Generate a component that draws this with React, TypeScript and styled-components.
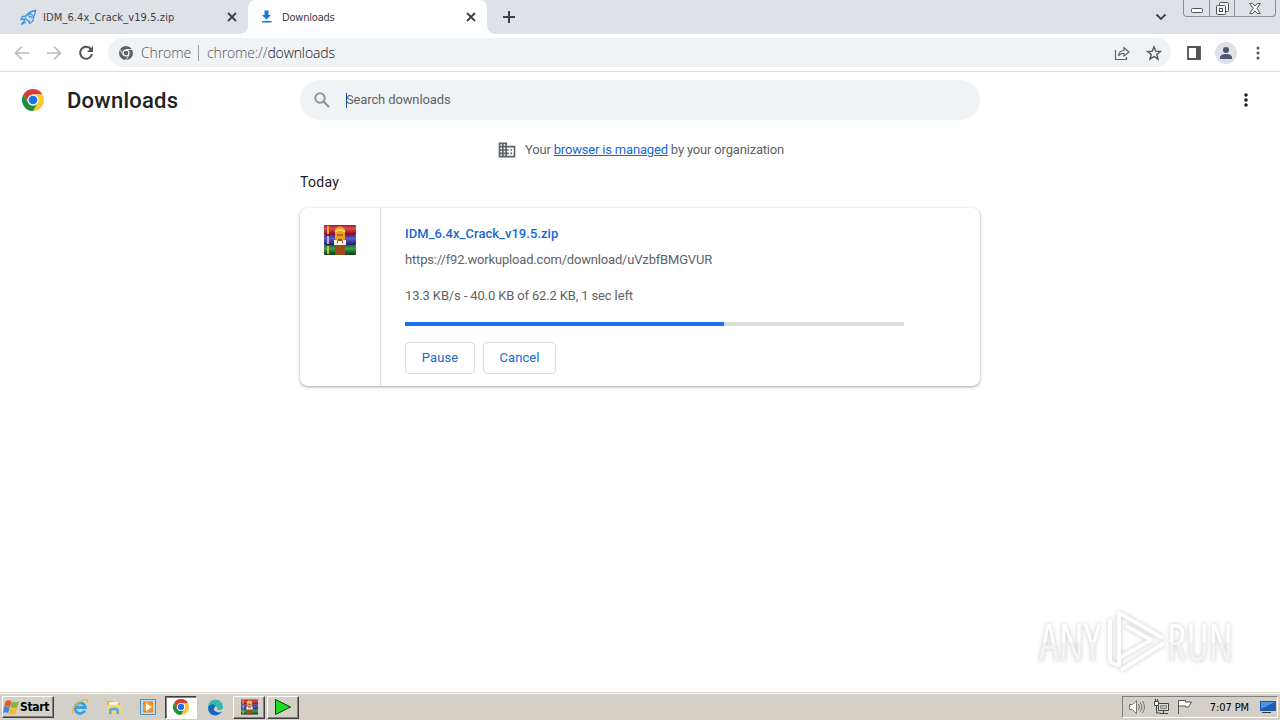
import React from "react";
import styled, { createGlobalStyle, css } from "styled-components";

const GlobalStyle = createGlobalStyle`
  * {
    box-sizing: border-box;
  }
  body {
    margin: 0;
    overflow: hidden;
    background: #fff;
    font-family: Roboto, sans-serif;
  }
  svg {
    display: block;
    flex-shrink: 0;
  }
`;

const Screen = styled.div`
  width: 1280px;
  height: 720px;
  display: flex;
  flex-direction: column;
  position: relative;
`;

const TabStrip = styled.div`
  display: flex;
  height: 34px;
  flex-shrink: 0;
  background: #dee1e6;
`;

const Tab = styled.div<{ $active?: boolean }>`
  display: flex;
  align-items: center;
  width: ${(p) => (p.$active ? 239 : 248)}px;
  height: 34px;
  padding: 0 10px 0 ${(p) => (p.$active ? 10 : 20)}px;
  position: relative;
  ${(p) =>
    p.$active &&
    css`
      background: #fff;
      border-radius: 8px 8px 0 0;
      &::before,
      &::after {
        content: "";
        position: absolute;
        bottom: 0;
        width: 8px;
        height: 8px;
      }
      &::before {
        left: -8px;
        background: radial-gradient(circle at 0 0, transparent 7.5px, #fff 8px);
      }
      &::after {
        right: -8px;
        background: radial-gradient(circle at 100% 0, transparent 7.5px, #fff 8px);
      }
    `}
`;

const TabTitle = styled.span<{ $spacing: number; $gap?: number }>`
  flex: 1;
  margin-left: ${(p) => p.$gap ?? 7}px;
  font: 11px "DejaVu Sans Condensed", "DejaVu Sans", sans-serif;
  font-stretch: condensed;
  letter-spacing: ${(p) => p.$spacing}px;
  color: #3c4043;
  white-space: nowrap;
`;

const NewTab = styled.div`
  width: 44px;
  display: flex;
  align-items: center;
  justify-content: center;
`;

const TabSearch = styled.div`
  margin-left: auto;
  margin-right: 16px;
  display: flex;
  align-items: center;
`;

const WindowButtons = styled.div`
  display: flex;
  width: 93px;
  height: 17px;
  margin-right: 4px;
  border: 1px solid #8b8e94;
  border-top: 0;
  border-radius: 0 0 4px 4px;
`;

const WindowButton = styled.div<{ $width: number }>`
  width: ${(p) => p.$width}px;
  display: flex;
  align-items: center;
  justify-content: center;
  & + & {
    border-left: 1px solid #8b8e94;
  }
`;

const Toolbar = styled.div`
  display: flex;
  align-items: center;
  height: 38px;
  flex-shrink: 0;
  padding-left: 14px;
  border-bottom: 1px solid #dadce0;
`;

const NavButtons = styled.div`
  display: flex;
  gap: 16px;
  margin-right: 14px;
`;

const AddressBar = styled.div`
  display: flex;
  align-items: center;
  width: 1063px;
  height: 29px;
  padding: 0 9px 0 11px;
  border-radius: 15px;
  background: #f0f3f5;
`;

const AddressText = styled.span<{ $color: string; $gap?: number }>`
  margin-left: ${(p) => p.$gap ?? 0}px;
  font: 14px "Open Sans", "Noto Sans", sans-serif;
  font-weight: 300;
  letter-spacing: -0.12px;
  color: ${(p) => p.$color};
`;

const AddressDivider = styled.div`
  width: 1px;
  height: 16px;
  margin: 0 8px 0 7px;
  background: #9aa0a6;
`;

const AddressActions = styled.div`
  display: flex;
  gap: 16px;
  margin-left: auto;
`;

const ToolbarActions = styled.div`
  display: flex;
  align-items: center;
  margin-left: 15px;
`;

const Avatar = styled.div`
  display: flex;
  align-items: center;
  justify-content: center;
  width: 22px;
  height: 22px;
  margin: 0 19px 0 14px;
  border-radius: 50%;
  background: #dee1e6;
`;

const Header = styled.header`
  display: flex;
  align-items: center;
  height: 56px;
  flex-shrink: 0;
  padding: 0 25px 0 22px;
`;

const PageTitle = styled.h1`
  width: 233px;
  margin: 0 0 0 23px;
  font-size: 22px;
  font-weight: 500;
  letter-spacing: 0.25px;
  color: #202124;
`;

const SearchField = styled.div`
  display: flex;
  align-items: center;
  width: 680px;
  height: 40px;
  padding-left: 12px;
  border-radius: 20px;
  background: #f0f3f5;
`;

const Caret = styled.div`
  width: 1px;
  height: 15px;
  margin-left: 14px;
  background: #1a4fa3;
`;

const SearchText = styled.span`
  margin-left: -1px;
  padding-bottom: 2px;
  font-size: 13px;
  letter-spacing: -0.13px;
  color: #5f6368;
`;

const HeaderMenu = styled.div`
  margin-left: auto;
`;

const Main = styled.main`
  width: 680px;
  margin: 0 auto;
  flex: 1;
`;

const ManagedNote = styled.div`
  display: flex;
  align-items: center;
  height: 20px;
  margin: 12px 0 0 197px;
  font-size: 13px;
  color: #5f6368;
  white-space: pre;
`;

const NoteText = styled.span`
  margin-left: 8px;
  padding-bottom: 2px;
  letter-spacing: -0.18px;
`;

const NoteLink = styled.a`
  color: #1967d2;
  text-decoration: underline;
`;

const DateHeading = styled.h2`
  height: 20px;
  margin: 12px 0 16px;
  font-size: 14px;
  line-height: 20px;
  font-weight: 400;
  letter-spacing: 0.3px;
  color: #202124;
`;

const Card = styled.section`
  display: flex;
  height: 178px;
  border-radius: 8px;
  background: #fff;
  box-shadow: 0 1px 2px rgba(60, 64, 67, 0.3), 0 1px 3px 1px rgba(60, 64, 67, 0.15);
`;

const FileIcon = styled.div`
  width: 81px;
  padding: 16px 0 0 24px;
  border-right: 1px solid #dadce0;
`;

const Details = styled.div`
  padding: 16px 0 0 24px;
`;

const FileName = styled.div`
  height: 20px;
  font-size: 13px;
  line-height: 20px;
  font-weight: 500;
  letter-spacing: 0.04px;
  color: #1967d2;
`;

const FileText = styled.div<{ $top: number; $spacing: number }>`
  height: 20px;
  margin-top: ${(p) => p.$top}px;
  font-size: 13px;
  line-height: 20px;
  letter-spacing: ${(p) => p.$spacing}px;
  color: #5f6368;
  white-space: nowrap;
`;

const ProgressBar = styled.div`
  width: 499px;
  height: 4px;
  margin: 16px 0;
  background: #dadce0;
`;

const Progress = styled.div`
  height: 4px;
  background: #1a73e8;
`;

const Actions = styled.div`
  display: flex;
  gap: 8px;
`;

const ActionButton = styled.button<{ $width: number }>`
  width: ${(p) => p.$width}px;
  height: 32px;
  padding: 0 0 2px;
  border: 1px solid #dadce0;
  border-radius: 4px;
  background: #fff;
  font: 400 13px Roboto, sans-serif;
  letter-spacing: 0.1px;
  color: #1967d2;
`;

const Watermark = styled.div`
  position: absolute;
  left: 1039px;
  top: 606px;
  display: flex;
  align-items: center;
  height: 70px;
  filter: drop-shadow(0 0 2px rgba(0, 0, 0, 0.22));
`;

const WatermarkWord = styled.div<{ $width: number }>`
  width: ${(p) => p.$width}px;
  white-space: nowrap;
`;

const WatermarkText = styled.div<{ $width: number; $scale: number }>`
  width: ${(p) => p.$width}px;
  height: 60px;
  font: 51px/60px "Open Sans", Roboto, sans-serif;
  font-stretch: condensed;
  color: transparent;
  background: linear-gradient(#fff 52%, #f3f3f3 52%);
  background-clip: text;
  transform: scaleX(${(p) => p.$scale});
  transform-origin: 0 50%;
`;

const Taskbar = styled.footer`
  display: flex;
  align-items: center;
  height: 28px;
  flex-shrink: 0;
  padding: 1px 2px 0;
  background: #d4d0c8;
  border-top: 1px solid #d4d0c8;
  box-shadow: inset 0 1px 0 #fff;
`;

const raised = css`
  border: 1px solid;
  border-color: #fff #404040 #404040 #fff;
  box-shadow: inset -1px -1px 0 #808080;
`;

const StartButton = styled.div`
  display: flex;
  align-items: center;
  width: 52px;
  height: 22px;
  margin-right: 9px;
  ${raised}
`;

const StartLabel = styled.span`
  font: bold 12px "DejaVu Sans Condensed", "DejaVu Sans", sans-serif;
  font-stretch: condensed;
  letter-spacing: -0.3px;
  color: #000;
`;

const TaskButton = styled.div<{
  $state?: "raised" | "pressed";
  $width?: number;
  $gap?: number;
}>`
  display: flex;
  align-items: center;
  justify-content: center;
  width: ${(p) => p.$width ?? 34}px;
  height: 23px;
  margin-left: ${(p) => p.$gap ?? 0}px;
  ${(p) => p.$state === "raised" && raised}
  ${(p) =>
    p.$state === "pressed" &&
    css`
      background: #fff;
      border: 1px solid;
      border-color: #404040 #fff #fff #404040;
      box-shadow: inset 1px 1px 0 #808080;
    `}
`;

const Tray = styled.div`
  display: flex;
  align-items: center;
  width: 156px;
  height: 22px;
  margin-left: auto;
  padding: 0 1px 0 5px;
  border: 1px solid;
  border-color: #808080 #fff #fff #808080;
`;

const TrayIcons = styled.div`
  display: flex;
  gap: 8px;
`;

const Clock = styled.span`
  margin-left: auto;
  margin-right: 11px;
  font: 11px "DejaVu Sans Condensed", "DejaVu Sans", sans-serif;
  font-stretch: condensed;
  letter-spacing: -0.1px;
  color: #000;
`;

const ChromeLogo: React.FC<{ size: number; mono?: boolean }> = ({ size, mono }) => (
  <svg width={size} height={size} viewBox="0 0 48 48">
    <circle cx="24" cy="24" r="24" fill={mono ? "#5f6368" : "#fff"} />
    {!mono && (
      <>
        <path d="M3.2 12a24 24 0 0 1 41.6 0H24a12 12 0 0 0-10.4 18z" fill="#db3a30" />
        <path d="M44.8 12A24 24 0 0 1 24 48l10.4-18A12 12 0 0 0 24 12z" fill="#fcc934" />
        <path d="M24 48A24 24 0 0 1 3.2 12l10.4 18a12 12 0 0 0 20.8 0z" fill="#1e8e3e" />
      </>
    )}
    {mono && (
      <path d="M24 12h22M13.6 30L3 11M34.4 30L24 48" stroke="#f1f3f4" strokeWidth="3" fill="none" />
    )}
    <circle cx="24" cy="24" r="12" fill="#fff" />
    <circle cx="24" cy="24" r={mono ? 8 : 9.5} fill={mono ? "#5f6368" : "#1a73e8"} />
  </svg>
);

const WinrarIcon: React.FC<{ width: number; height: number }> = ({ width, height }) => (
  <svg width={width} height={height} viewBox="0 0 32 32" preserveAspectRatio="none">
    <defs>
      <linearGradient id="red" x2="0" y2="1">
        <stop stopColor="#a01c2c" />
        <stop offset=".35" stopColor="#e04552" />
        <stop offset="1" stopColor="#780c18" />
      </linearGradient>
      <linearGradient id="blue" x2="0" y2="1">
        <stop stopColor="#3a3590" />
        <stop offset=".35" stopColor="#5a5bd0" />
        <stop offset="1" stopColor="#211d5e" />
      </linearGradient>
      <linearGradient id="green" x2="0" y2="1">
        <stop stopColor="#1c6b2a" />
        <stop offset=".35" stopColor="#35a04b" />
        <stop offset="1" stopColor="#083a10" />
      </linearGradient>
    </defs>
    <rect x="0" y="1" width="32" height="10" rx="1" fill="url(#red)" />
    <rect x="0" y="11" width="32" height="10" rx="1" fill="url(#blue)" />
    <rect x="0" y="21" width="32" height="10" rx="1" fill="url(#green)" />
    <path d="M4 2v8M4 22v8" stroke="#e8b33a" strokeWidth="2" />
    <path d="M4 12v8" stroke="#b9b5cf" strokeWidth="2" />
    <rect x="11" y="21" width="10" height="10" fill="#a04a1c" />
    <path d="M11 8q0-5.500 5-5.500T21 8v7q-1 3-5 3t-5-3z" fill="#e9a020" />
    <path d="M11 7.500q5-3 10 0" stroke="#ffd45b" strokeWidth="2" fill="none" />
    <path d="M13 10h6v2h-6z" fill="#bd651c" />
    <path d="M10 16h3v3h1v-2h4v2h1v-3h3v5H10z" fill="#fff5df" />
    <path d="M14 15h4v2h-4z" fill="#8b4a1c" />
  </svg>
);

const Dots: React.FC<{ color: string; r: number }> = ({ color, r }) => (
  <svg width="4" height="16" viewBox="0 0 4 16" fill={color}>
    <circle cx="2" cy="3" r={r} />
    <circle cx="2" cy="8" r={r} />
    <circle cx="2" cy="13" r={r} />
  </svg>
);

const CloseIcon = () => (
  <svg width="12" height="12" viewBox="0 0 12 12" stroke="#3c4043" strokeWidth="1.8">
    <path d="M2 2l8 8M10 2l-8 8" />
  </svg>
);

const RocketIcon = () => (
  <svg width="17" height="17" viewBox="0 0 17 17" fill="#d4eafc" stroke="#3b8fdd" strokeWidth="1.3">
    <path d="M5 9Q7 3 15.5 1.5 15 9 8.5 12.500z" />
    <path d="M6 7L2.500 7.500 1 10.500l4-.5M9 12l.5 2.500L13 12l.5-4" />
    <path d="M5 11l-3.500 4.500L6 13" />
    <circle cx="10.500" cy="6.500" r="1.700" />
  </svg>
);

const MenuTray: React.FC = () => (
  <Tray>
    <TrayIcons>
      <svg width="17" height="16" viewBox="0 0 17 16" fill="none" stroke="#777">
        <path d="M1.500 5.500h3l4-4v13l-4-4h-3z" fill="#fff" />
        <path d="M10.500 5q2 3 0 6M12.500 3.500q3 4.500 0 9M14.500 2q4 6 0 12" />
      </svg>
      <svg width="16" height="16" viewBox="0 0 16 16" fill="none" stroke="#444">
        <path d="M5.500 4.500h10v7h-10z" fill="#ddd" />
        <path d="M7.500 6.500h6v3h-6z" fill="#bbb" stroke="#888" />
        <path d="M7 14.500h8M10.500 12v2M3.500 7v7h4" />
        <path d="M1.500 2.500h4v4h-4zM2.500 0v2M4.500 0v2" fill="#fff" />
      </svg>
      <svg width="16" height="16" viewBox="0 0 16 16" fill="#fff" stroke="#555">
        <path d="M1.500 1v14" />
        <path d="M1.500 1.500h7v1.500h6l-2 3-1 2h-3V7h-7z" />
      </svg>
    </TrayIcons>
    <Clock>7:07 PM</Clock>
    <svg width="16" height="14" viewBox="0 0 16 14">
      <path d="M0 1h16v10H0z" fill="#1d5cb4" />
      <path d="M1 2h14L1 9z" fill="#4c94df" />
      <path d="M2 12h9v1H2z" fill="#333" />
    </svg>
  </Tray>
);

const App: React.FC = () => {
  const progress = 64;

  return (
    <>
      <GlobalStyle />
      <Screen>
        <TabStrip>
          <Tab>
            <RocketIcon />
            <TabTitle $spacing={0.1} $gap={6}>
              IDM_6.4x_Crack_v19.5.zip
            </TabTitle>
            <CloseIcon />
          </Tab>
          <Tab $active>
            <svg width="17" height="16" viewBox="0 0 17 16" fill="#1a73e8">
              <path d="M6.500 1.500h4V6H13l-4.500 4.500L4 6h2.500zM4 12h9.500v1.500H4z" />
            </svg>
            <TabTitle $spacing={-0.2}>Downloads</TabTitle>
            <CloseIcon />
          </Tab>
          <NewTab>
            <svg width="12" height="12" viewBox="0 0 12 12" stroke="#3c4043" strokeWidth="2">
              <path d="M6 0v12M0 6h12" />
            </svg>
          </NewTab>
          <TabSearch>
            <svg width="12" height="8" viewBox="0 0 12 8" fill="none" stroke="#3c4043" strokeWidth="1.8">
              <path d="M1.500 1.500L6 6l4.500-4.500" />
            </svg>
          </TabSearch>
          <WindowButtons>
            <WindowButton $width={25}>
              <svg width="12" height="9" viewBox="0 0 12 9">
                <rect x=".5" y="4.500" width="11" height="4" rx="1" fill="#fff" stroke="#505359" />
              </svg>
            </WindowButton>
            <WindowButton $width={25}>
              <svg width="13" height="13" viewBox="0 0 13 13" fill="#f5f6f8" stroke="#505359">
                <rect x="3.500" y=".5" width="9" height="9" rx="1" />
                <rect x=".5" y="3.500" width="9" height="9" rx="1" />
                <rect x="3.500" y="6.500" width="3" height="3" />
              </svg>
            </WindowButton>
            <WindowButton $width={41}>
              <svg width="12" height="11" viewBox="0 0 12 11" fill="#fff" stroke="#505359">
                <path d="M.7 .5h3L6 3 8.300.5h3L8 5.500l3.300 5h-3L6 8 3.700 10.500h-3L4 5.500z" />
              </svg>
            </WindowButton>
          </WindowButtons>
        </TabStrip>

        <Toolbar>
          <NavButtons>
            <svg width="16" height="16" viewBox="0 0 16 16" fill="none" stroke="#babcbe" strokeWidth="1.7">
              <path d="M15 8H2M8 1.500L1.500 8 8 14.500" />
            </svg>
            <svg width="16" height="16" viewBox="0 0 16 16" fill="none" stroke="#babcbe" strokeWidth="1.7">
              <path d="M1 8h13M8 1.500L14.500 8 8 14.500" />
            </svg>
            <svg width="16" height="16" viewBox="0 0 16 16" fill="none" stroke="#505357" strokeWidth="2">
              <path d="M13 4.200A6 6 0 1 0 14 9" />
              <path d="M15 1v6H9z" fill="#505357" stroke="none" />
            </svg>
          </NavButtons>
          <AddressBar>
            <ChromeLogo size={14} mono />
            <AddressText $color="#50545a" $gap={8}>
              Chrome
            </AddressText>
            <AddressDivider />
            <AddressText $color="#50545a">chrome://</AddressText>
            <AddressText $color="#101114">downloads</AddressText>
            <AddressActions>
              <svg width="16" height="16" viewBox="0 0 16 16" fill="none" stroke="#5f6368" strokeWidth="1.200">
                <path d="M1.500 5v9.500h11V12" />
                <path d="M4.500 11q.5-5.500 5.500-5.500v-3L15 7l-5 4V8.500q-3.500-.5-5.500 2.500z" />
              </svg>
              <svg width="16" height="16" viewBox="0 0 16 16" fill="none" stroke="#505357" strokeWidth="1.400">
                <path d="M8 1.800l1.700 4.400 4.700.3-3.600 3 1.200 4.600L8 11.500l-4 2.600 1.200-4.600-3.600-3 4.700-.3z" />
              </svg>
            </AddressActions>
          </AddressBar>
          <ToolbarActions>
            <svg width="15" height="14" viewBox="0 0 15 14">
              <path d="M2 1h12v12H2z" fill="none" stroke="#505357" strokeWidth="1.800" />
              <path d="M10 1h4v12h-4z" fill="#505357" />
            </svg>
            <Avatar>
              <svg width="12" height="12" viewBox="0 0 12 12" fill="#4a5673">
                <circle cx="6" cy="3" r="3" />
                <path d="M0 12v-2q1-3 6-3t6 3v2z" />
              </svg>
            </Avatar>
            <Dots color="#505357" r={1.5} />
          </ToolbarActions>
        </Toolbar>

        <Header>
          <ChromeLogo size={22} />
          <PageTitle>Downloads</PageTitle>
          <SearchField>
            <svg width="20" height="20" viewBox="0 0 20 20" fill="none" stroke="#8c9095" strokeWidth="2">
              <circle cx="8" cy="8" r="4.700" />
              <path d="M11.500 11.500l5.500 5.500" />
            </svg>
            <Caret />
            <SearchText>Search downloads</SearchText>
          </SearchField>
          <HeaderMenu>
            <svg width="18" height="16" viewBox="0 0 18 16" fill="#202124">
              <circle cx="9" cy="3" r="1.800" />
              <circle cx="9" cy="8" r="1.800" />
              <circle cx="9" cy="13" r="1.800" />
            </svg>
          </HeaderMenu>
        </Header>

        <Main>
          <ManagedNote>
            <svg width="20" height="20" viewBox="0 0 24 24" fill="#5f6368">
              <path d="M12 7V3H2v18h20V7H12zM6 19H4v-2h2v2zm0-4H4v-2h2v2zm0-4H4V9h2v2zm0-4H4V5h2v2zm4 12H8v-2h2v2zm0-4H8v-2h2v2zm0-4H8V9h2v2zm0-4H8V5h2v2zm10 12h-8v-2h2v-2h-2v-2h2v-2h-2V9h8v10zm-2-8h-2v2h2v-2zm0 4h-2v2h2v-2z" />
            </svg>
            <NoteText>
              Your <NoteLink>browser is managed</NoteLink> by your organization
            </NoteText>
          </ManagedNote>
          <DateHeading>Today</DateHeading>
          <Card>
            <FileIcon>
              <WinrarIcon width={32} height={32} />
            </FileIcon>
            <Details>
              <FileName>IDM_6.4x_Crack_v19.5.zip</FileName>
              <FileText $top={6} $spacing={-0.18}>
                https://f92.workupload.com/download/uVzbfBMGVUR
              </FileText>
              <FileText $top={16} $spacing={-0.14}>
                13.3 KB/s - 40.0 KB of 62.2 KB, 1 sec left
              </FileText>
              <ProgressBar>
                <Progress style={{ width: `${progress}%` }} />
              </ProgressBar>
              <Actions>
                <ActionButton $width={70}>Pause</ActionButton>
                <ActionButton $width={73}>Cancel</ActionButton>
              </Actions>
            </Details>
          </Card>
        </Main>

        <Taskbar>
          <StartButton>
            <svg width="17" height="17" viewBox="0 0 16 16">
              <path d="M2.500 2q3-1.500 5.500 0L6.500 7.500q-2.500-1.500-5.500 0z" fill="#e6582a" />
              <path d="M8.200 2.300q3 1.500 6.800-.3l-1.500 5.800q-3.500 1.500-6.500-.2z" fill="#7fba3c" />
              <path d="M.8 7.800q3-1.500 5.500 0L4.800 13.200q-2.700-1.500-4.700 0z" fill="#3f84d8" />
              <path d="M6.800 8.100q3.500 1.500 6.500.2L11.800 14q-3.500 1-6.500-.5z" fill="#f5bd2a" />
            </svg>
            <StartLabel>Start</StartLabel>
          </StartButton>
          <TaskButton>
            <svg width="18" height="18" viewBox="0 0 18 18" fill="none">
              <path d="M14 12.500a5.300 5.300 0 1 1 .5-3H5" stroke="#36a0e0" strokeWidth="2.800" />
              <path d="M2 15.500C-1 12 8 2 15 1.500q2.500 0 1 3.500" stroke="#e8b83a" strokeWidth="1.300" />
            </svg>
          </TaskButton>
          <TaskButton>
            <svg width="16" height="16" viewBox="0 0 16 16">
              <path d="M1 2h6l1 2h6v10H1z" fill="#d9b44c" />
              <path d="M3 3h9v5H3z" fill="#f8f3da" />
              <path d="M1 6h14v8H1z" fill="#f3d878" />
              <path d="M3 15v-4q0-2.500 5-2.500t5 2.500v4h-2.500v-3.500h-5V15z" fill="#5aabdb" />
            </svg>
          </TaskButton>
          <TaskButton>
            <svg width="16" height="16" viewBox="0 0 16 16">
              <path d="M.5 .5h15v15H.5z" fill="#b9dbf1" stroke="#5292be" />
              <path d="M3 2.500h10v11H3z" fill="#ee8218" />
              <circle cx="8" cy="8" r="5" fill="#f59a32" />
              <path d="M6 4v8l5.500-4z" fill="#fff" />
            </svg>
          </TaskButton>
          <TaskButton $state="pressed" $width={32}>
            <ChromeLogo size={16} />
          </TaskButton>
          <TaskButton $width={36}>
            <svg width="17" height="17" viewBox="0 0 17 17">
              <path d="M1 8a7.500 7.500 0 0 1 15 0q0 3-3.500 3-3 0-2-2Q9 6 6 7q-3 1-2 5-3-1-3-4z" fill="#35b9a9" />
              <path d="M1 8q3-4 7-2 1 1 0 2-3 3 2 5 2 1 5-.5-3 4-7 4-7-.5-7-8.500z" fill="#1767c1" />
            </svg>
          </TaskButton>
          <TaskButton $state="raised" $width={32}>
            <WinrarIcon width={17} height={16} />
          </TaskButton>
          <TaskButton $state="raised" $width={32} $gap={2}>
            <svg width="18" height="16" viewBox="0 0 18 16">
              <path d="M1.500 .5v15l15-7.500z" fill="#15dd20" stroke="#073d0a" />
            </svg>
          </TaskButton>
          <MenuTray />
        </Taskbar>

        <Watermark>
          <WatermarkWord $width={68}>
            <WatermarkText $width={80} $scale={0.88}>
              ANY
            </WatermarkText>
          </WatermarkWord>
          <svg width="60" height="70" viewBox="0 0 60 70" fill="none" stroke="#fdfdfd" strokeWidth="4" strokeLinejoin="round">
            <path d="M12 61V7l44 25" />
            <path d="M3 56V13M12 14v38l32-18-25-14M14 64l43-27M3 56l7 3" />
          </svg>
          <WatermarkWord $width={66}>
            <WatermarkText $width={85} $scale={0.84}>
              RUN
            </WatermarkText>
          </WatermarkWord>
        </Watermark>
      </Screen>
    </>
  );
};

export default App;
